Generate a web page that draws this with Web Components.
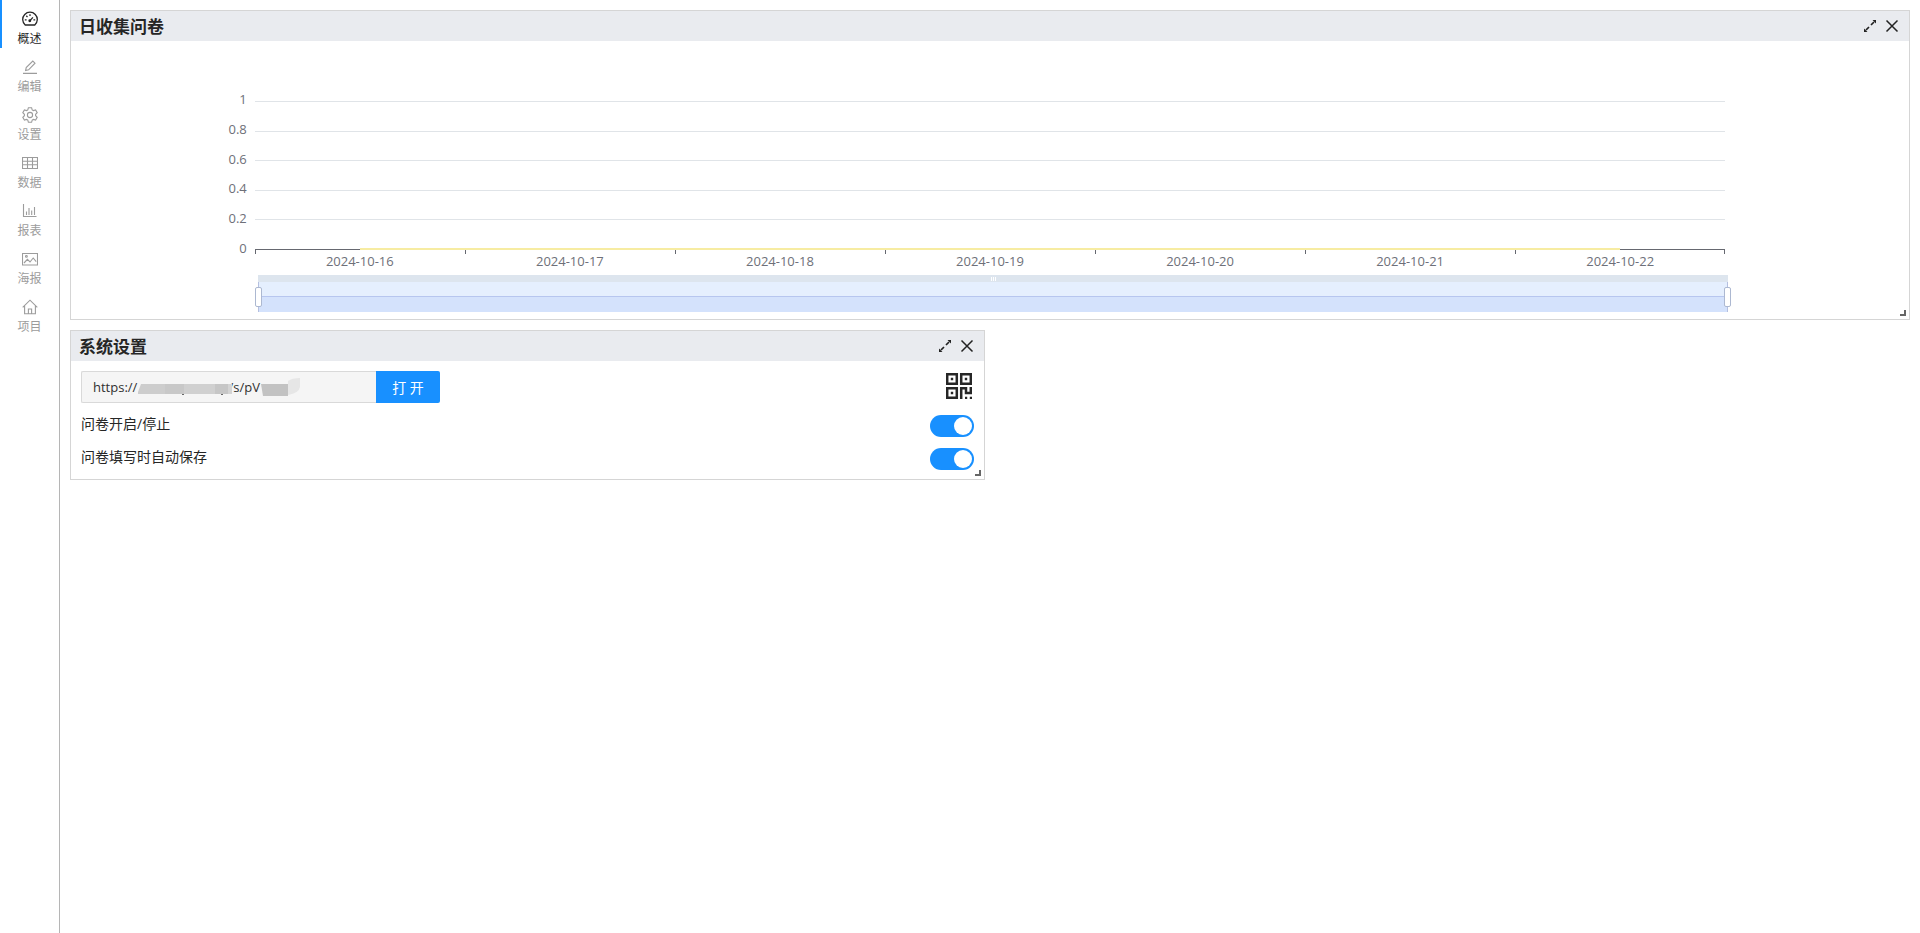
<!DOCTYPE html>
<html lang="zh-CN">
<head>
<meta charset="utf-8">
<meta name="viewport" content="width=device-width, initial-scale=1">
<title>概述</title>
<style>
  html, body { margin: 0; min-height: 100%; }
  body { font-family: "Open Sans", "Noto Sans CJK SC", sans-serif; font-size: 14px; color: #262626; background: #fff; }
</style>
</head>
<body>
<survey-app></survey-app>
<script>
const ICONS = {
  dashboard: '<path d="M3.2 14A7.3 7.3 0 1 1 12.8 14Z"/><path d="M8 9.6 10.9 6.4M8 3.2V5M2.8 8.8H4.6M11.4 8.8H13.2M4.3 4.8 5.5 6"/><circle cx="7.8" cy="9.7" r=".8" fill="currentColor"/>',
  edit: '<path d="M1 14.4H15M3.6 11.6 4.2 8.6 10.8 2 13 4.2 6.6 10.8Z"/>',
  setting: '<path d="M6.4 .7H9.6L10.2 2.9 11.4 3.6 13.6 3 15.2 5.7 13.6 7.3V8.7L15.2 10.3 13.6 13 11.4 12.4 10.2 13.1 9.6 15.3H6.4L5.8 13.1 4.6 12.4 2.4 13 .8 10.3 2.4 8.7V7.3L.8 5.7 2.4 3 4.6 3.6 5.8 2.9Z"/><circle cx="8" cy="8" r="2.6"/>',
  table: '<path d="M.5 2.5H15.5V13.5H.5ZM.5 6.2H15.5M.5 9.8H15.5M5.5 2.5V13.5M10.5 2.5V13.5"/>',
  chart: '<path d="M1.5 1V13.5H14.5M4.5 12V8.5M7 12V5M9.7 12V7.5M12.5 12V4"/>',
  picture: '<path d="M.5 2.5H15.5V14H.5ZM2 12 5.4 8.4 8 11 11.2 7 14.2 10.6"/><circle cx="4.4" cy="5.4" r=".9"/>',
  home: '<path d="M.7 8.4 8 1.2 15.3 8.4M2.6 7V14.7H13.4V7M6.4 14.5V10H9.6V14.5"/>'
};

function attach(el, html) {
  const t = document.createElement('template');
  t.innerHTML = html;
  const root = el.attachShadow({ mode: 'open' });
  root.append(t.content.cloneNode(true));
  return root;
}

class NavItem extends HTMLElement {
  connectedCallback() {
    if (this.shadowRoot) return;
    attach(this, `<style>
      :host { display: block; color: #9c9c9c; }
      :host([active]) { color: #262626; }
      a { box-sizing: border-box; display: flex; flex-direction: column; align-items: center; gap: 3px; height: 48px; padding: 11px 2px 0 0;
          border-left: 2px solid transparent; color: inherit; text-decoration: none; font-size: 12px; line-height: 18px; }
      :host([active]) a { border-color: #1890ff; }
      svg { flex: none; width: 16px; height: 16px; fill: none; stroke: currentColor; stroke-width: 1.1; }
      :host([active]) svg { stroke-width: 1.3; }
    </style><a href="#"><svg viewBox="0 0 16 16" aria-hidden="true">${ICONS[this.getAttribute('icon')]}</svg><slot></slot></a>`);
  }
}
customElements.define('nav-item', NavItem);

class DashPanel extends HTMLElement {
  connectedCallback() {
    if (this.shadowRoot) return;
    attach(this, `<style>
      :host { display: flex; flex-direction: column; position: relative; border: 1px solid #d5d5d5; box-sizing: border-box; min-width: 0; }
      header { display: flex; align-items: center; gap: 6px; height: 30px; padding: 0 9px 0 8px; background: #e9ebef; }
      h2 { flex: 1; margin: 0; font-size: 17px; line-height: 28px; padding-top: 2px; font-weight: 700; }
      button { display: flex; padding: 0; border: 0; background: none; color: #222; }
      svg { width: 16px; height: 16px; display: block; }
      .grip { position: absolute; right: 3px; bottom: 3px; width: 4px; height: 4px; border: solid #666; border-width: 0 2px 2px 0; }
    </style>
    <header><h2></h2>
      <button type="button" aria-label="放大"><svg viewBox="0 0 16 16"><path d="M4 12 7 9M9 7 12 4" stroke="currentColor" stroke-width="1.7"/><path d="M2 14V10.5L5.5 14ZM14 2V5.5L10.5 2Z" fill="currentColor"/></svg></button>
      <button type="button" aria-label="关闭"><svg viewBox="0 0 16 16"><path d="M2.5 2.5 13.5 13.5M13.5 2.5 2.5 13.5" stroke="currentColor" stroke-width="1.5"/></svg></button>
    </header><slot></slot><span class="grip"></span>`);
    this.shadowRoot.querySelector('h2').textContent = this.getAttribute('heading');
  }
}
customElements.define('dash-panel', DashPanel);

class DailyChart extends HTMLElement {
  connectedCallback() {
    if (this.shadowRoot) return;
    const values = ['1', '0.8', '0.6', '0.4', '0.2', '0'];
    const days = [16, 17, 18, 19, 20, 21, 22];
    attach(this, `<style>
      :host { display: grid; grid-template-columns: 10% 1fr 10%; grid-template-rows: 149px 25px 37px; padding: 60px 0 7px; color: #6e7079; font-size: 13px; }
      .values { display: flex; flex-direction: column; justify-content: space-between; text-align: right; padding-right: 8px; margin: -12px 0 -8px; line-height: 20px; }
      .plot { grid-column: 2; position: relative; display: flex; flex-direction: column; justify-content: space-between; }
      .plot i { height: 1px; background: #e0e4e8; }
      .plot i:last-of-type { background: #666870; }
      .series { position: absolute; left: calc(100% / 14); right: calc(100% / 14); bottom: 0; height: 2px; background: #f7eca2; }
      .days { grid-column: 2; display: grid; grid-template-columns: repeat(7, 1fr); text-align: center; line-height: 22px;
              background: repeating-linear-gradient(90deg, #666870 0 1px, transparent 1px calc(100% / 7)) 0 0 / 100% 4px no-repeat; position: relative; }
      .days::after { content: ""; position: absolute; right: 0; top: 0; width: 1px; height: 4px; background: #666870; }
      .zoom { grid-column: 2; position: relative; margin: 0 -3px 0 3px; display: grid; grid-template-rows: 7px 14px 1px 15px; }
      .bar { background: #dde5ee; display: flex; justify-content: center; align-items: center; gap: 1px; }
      .bar b { width: 1px; height: 4px; background: #fff; }
      .top { background: #e5effe; } .line { background: #b7c6ef; } .low { background: #d4e2fc; }
      .stem { position: absolute; top: 7px; bottom: 0; width: 1px; background: #b5bfdf; }
      .handle { position: absolute; top: 12px; box-sizing: border-box; width: 7px; height: 20px; border: 1px solid #acb8d1; border-radius: 2px; background: #fff; }
      .l { left: 0; } .r { right: 0; } .handle.l { left: -3px; } .handle.r { right: -3px; }
    </style>
    <div class="values">${values.map(v => `<span>${v}</span>`).join('')}</div>
    <div class="plot">${'<i></i>'.repeat(6)}<div class="series"></div></div>
    <div class="days">${days.map(d => `<span>2024-10-${d}</span>`).join('')}</div>
    <div class="zoom"><div class="bar"><b></b><b></b><b></b></div><div class="top"></div><div class="line"></div><div class="low"></div>
      <span class="stem l"></span><span class="stem r"></span><span class="handle l"></span><span class="handle r"></span></div>`);
  }
}
customElements.define('daily-chart', DailyChart);

class ToggleRow extends HTMLElement {
  connectedCallback() {
    if (this.shadowRoot) return;
    attach(this, `<style>
      :host { display: block; }
      label { display: flex; justify-content: space-between; align-items: flex-end; height: 23px; }
      span { align-self: flex-start; line-height: 20px; }
      input { appearance: none; display: block; box-sizing: border-box; margin: 0 1px 0 0; width: 44px; height: 22px; border-radius: 11px; background: #bfbfbf; padding: 2px; }
      input::before { content: ""; display: block; width: 18px; height: 18px; border-radius: 50%; background: #fff; }
      input:checked { background: #1890ff; }
      input:checked::before { margin-left: auto; }
    </style><label><span><slot></slot></span><input type="checkbox" role="switch" checked></label>`);
  }
}
customElements.define('toggle-row', ToggleRow);

class SystemSettings extends HTMLElement {
  connectedCallback() {
    if (this.shadowRoot) return;
    attach(this, `<style>
      :host { display: block; padding: 10px 9px 9px 10px; }
      .link { display: flex; align-items: flex-start; margin-bottom: 11px; }
      .field { position: relative; width: 295px; }
      input { box-sizing: border-box; display: block; width: 100%; height: 32px; margin: 0; padding: 0 11px; border: 1px solid #d9d9d9; border-right: 0; border-radius: 2px 0 0 2px;
              background: #f5f5f5; color: #303030; font: 13px "Open Sans", "Noto Sans CJK SC", sans-serif; }
      .mask { position: absolute; left: 0; top: 0; width: 240px; height: 32px; }
      .open { width: 64px; height: 32px; padding: 0; border: 0; border-radius: 0 2px 2px 0; background: #1890ff; color: #fff; font: inherit; }
      .qr { margin: 2px 3px 0 auto; padding: 0; border: 0; background: none; color: #262626; }
      .qr svg { display: block; width: 26px; height: 26px; }
      .rows { display: grid; gap: 10px; }
    </style>
    <div class="link">
      <div class="field"><input aria-label="问卷链接" readonly value="https://${'\u00a0'.repeat(27)}/s/pV">
        <svg class="mask" viewBox="0 0 240 32" aria-hidden="true">
          <path d="M57 21 60 13H84V23H57Z" fill="#cdcdcd"/><path d="M84 13H103V23H84Z" fill="#c8c8c8"/><path d="M103 13H134V23H103Z" fill="#d0d0d0"/><path d="M134 13H147V23H134Z" fill="#c6c6c6"/><path d="M147 13H151V23H147Z" fill="#d4d4d4"/>
          <path d="M101 23H103V24H101ZM140 23H142V24H140Z" fill="#666"/>
          <path d="M180 13H207V25H182Z" fill="#c2c2c2"/><path d="M207 10Q211 7 219 7V16Q218 22 207 24Z" fill="#e6e6e6"/>
        </svg></div>
      <button class="open" type="button">打 开</button>
      <button class="qr" type="button" aria-label="二维码"><svg viewBox="0 0 26 26" fill="none" stroke="currentColor" stroke-width="2.5"><path d="M1.2 1.2H10.8V10.8H1.2ZM15.2 1.2H24.8V10.8H15.2ZM1.2 15.2H10.8V24.8H1.2Z"/><path d="M15.2 26V15.2H20V20H24.8V14"/><path d="M4.8 4.8H7.2V7.2H4.8ZM18.8 4.8H21.2V7.2H18.8ZM4.8 18.8H7.2V21.2H4.8ZM19 23.8H21.2V26H19ZM23.8 23.8H26V26H23.8Z" fill="currentColor" stroke="none"/></svg></button>
    </div>
    <div class="rows"><toggle-row>问卷开启/停止</toggle-row><toggle-row>问卷填写时自动保存</toggle-row></div>`);
  }
}
customElements.define('system-settings', SystemSettings);

class SurveyApp extends HTMLElement {
  connectedCallback() {
    if (this.shadowRoot) return;
    attach(this, `<style>
      :host { display: grid; grid-template-columns: 60px 1fr; min-height: 100vh; }
      nav { border-right: 1px solid #b5b5b5; }
      main { display: grid; grid-template-columns: repeat(2, minmax(0, 1fr)); gap: 10px; padding: 10px; align-content: start; }
      .wide { grid-column: 1 / -1; }
    </style>
    <nav>
      <nav-item icon="dashboard" active>概述</nav-item><nav-item icon="edit">编辑</nav-item><nav-item icon="setting">设置</nav-item>
      <nav-item icon="table">数据</nav-item><nav-item icon="chart">报表</nav-item><nav-item icon="picture">海报</nav-item><nav-item icon="home">项目</nav-item>
    </nav>
    <main>
      <dash-panel class="wide" heading="日收集问卷"><daily-chart></daily-chart></dash-panel>
      <dash-panel heading="系统设置"><system-settings></system-settings></dash-panel>
    </main>`);
  }
}
customElements.define('survey-app', SurveyApp);
</script>
</body>
</html>
